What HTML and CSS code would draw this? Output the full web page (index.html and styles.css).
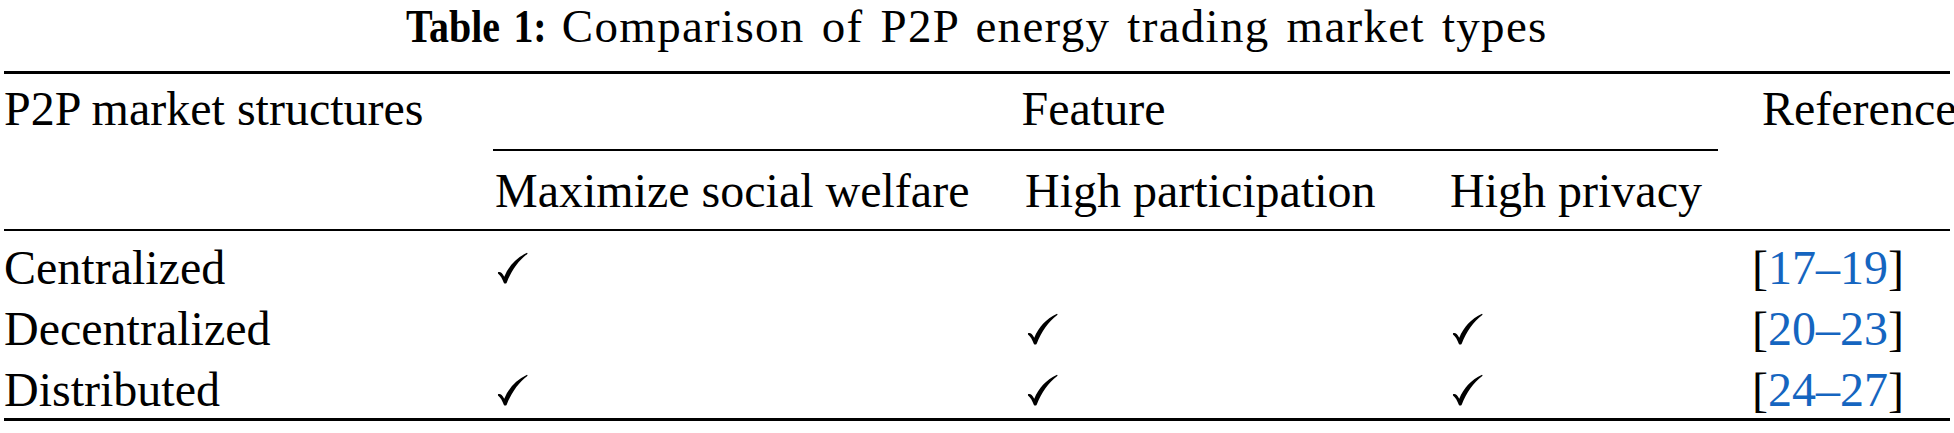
FILE: index.html
```html
<!DOCTYPE html>
<html lang="en">
<head>
  <meta charset="UTF-8">
  <meta name="viewport" content="width=device-width, initial-scale=1.0">
  <title>Table 1</title>
  <link rel="stylesheet" href="styles.css">
</head>
<body>
  <div class="caption"><span class="label">Table 1:</span>Comparison of P2P energy trading market types</div>

  <div class="table">
    <div class="head">
      <div class="cell structure">P2P market structures</div>
      <div class="cell feature">Feature</div>
      <div class="cell ref-head">Reference</div>
      <div class="cell sub">Maximize social welfare</div>
      <div class="cell sub">High participation</div>
      <div class="cell sub">High privacy</div>
    </div>

    <div class="body">
      <div class="cell">Centralized</div>
      <div class="cell"><svg class="check" viewBox="0 0 32 32"><path d="M1 20.5C3 19.5 5 20.5 7.5 25C12 14 20 5.5 31 0.3L31.6 1.2C22 8.5 15 18.5 10 31.2C9.4 32.4 7.6 32.4 7 31.2C5.5 27 3.5 23.5 1 21.6Z"/></svg></div>
      <div class="cell"></div>
      <div class="cell"></div>
      <div class="cell ref">[<span class="cite">17–19</span>]</div>

      <div class="cell">Decentralized</div>
      <div class="cell"></div>
      <div class="cell"><svg class="check" viewBox="0 0 32 32"><path d="M1 20.5C3 19.5 5 20.5 7.5 25C12 14 20 5.5 31 0.3L31.6 1.2C22 8.5 15 18.5 10 31.2C9.4 32.4 7.6 32.4 7 31.2C5.5 27 3.5 23.5 1 21.6Z"/></svg></div>
      <div class="cell"><svg class="check" viewBox="0 0 32 32"><path d="M1 20.5C3 19.5 5 20.5 7.5 25C12 14 20 5.5 31 0.3L31.6 1.2C22 8.5 15 18.5 10 31.2C9.4 32.4 7.6 32.4 7 31.2C5.5 27 3.5 23.5 1 21.6Z"/></svg></div>
      <div class="cell ref">[<span class="cite">20–23</span>]</div>

      <div class="cell">Distributed</div>
      <div class="cell"><svg class="check" viewBox="0 0 32 32"><path d="M1 20.5C3 19.5 5 20.5 7.5 25C12 14 20 5.5 31 0.3L31.6 1.2C22 8.5 15 18.5 10 31.2C9.4 32.4 7.6 32.4 7 31.2C5.5 27 3.5 23.5 1 21.6Z"/></svg></div>
      <div class="cell"><svg class="check" viewBox="0 0 32 32"><path d="M1 20.5C3 19.5 5 20.5 7.5 25C12 14 20 5.5 31 0.3L31.6 1.2C22 8.5 15 18.5 10 31.2C9.4 32.4 7.6 32.4 7 31.2C5.5 27 3.5 23.5 1 21.6Z"/></svg></div>
      <div class="cell"><svg class="check" viewBox="0 0 32 32"><path d="M1 20.5C3 19.5 5 20.5 7.5 25C12 14 20 5.5 31 0.3L31.6 1.2C22 8.5 15 18.5 10 31.2C9.4 32.4 7.6 32.4 7 31.2C5.5 27 3.5 23.5 1 21.6Z"/></svg></div>
      <div class="cell ref">[<span class="cite">24–27</span>]</div>
    </div>
  </div>
</body>
</html>
```

FILE: styles.css
```css
body {
  margin: 0;
  font-family: "Liberation Serif", "Times New Roman", serif;
  font-size: 48px;
  color: #000;
  background-color: #fff;
}

.caption {
  text-align: center;
  font-size: 47px;
  line-height: 52px;
  letter-spacing: 1.3px;
  word-spacing: 4px;
  margin-bottom: 19px;
}

/* the label is set in a narrower bold than the caption text */
.caption .label {
  display: inline-block;
  font-weight: bold;
  letter-spacing: 0;
  transform: scaleX(0.85);
  transform-origin: left;
  margin-right: -10px;
}

.table {
  margin: 0 4px;
  border-top: 3px solid #000;
  border-bottom: 3px solid #000;
}

.head,
.body {
  display: grid;
  grid-template-columns: 491px 530px 425px 302px 1fr;
}

.head {
  border-bottom: 2px solid #000;
}

.body {
  padding-top: 9px;
  row-gap: 5px;
}

.cell {
  line-height: 56px;
  white-space: nowrap;
}

.structure {
  grid-row: 1 / span 2;
  padding-top: 7px;
}

.ref-head {
  grid-column: 5;
  grid-row: 1 / span 2;
  padding: 7px 0 0 10px;
}

.feature {
  grid-column: 2 / span 3;
  margin: 0 34px 0 -2px;
  padding: 7px 24px 12px 0;
  border-bottom: 2px solid #000;
  text-align: center;
}

.sub {
  padding: 12px 0 10px;
}

.check {
  width: 31px;
  height: 32px;
  margin-left: 2px;
  fill: #000;
}

.cite {
  color: #1565c0;
}
```
